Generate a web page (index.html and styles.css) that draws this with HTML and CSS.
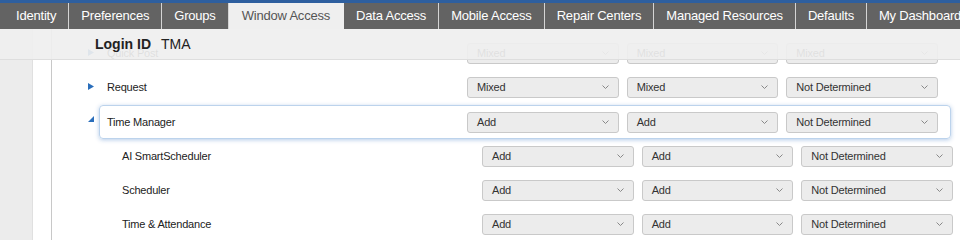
FILE: index.html
```html
<!DOCTYPE html>
<html lang="en">
<head>
<meta charset="utf-8">
<title>Window Access</title>
<link rel="stylesheet" href="styles.css">
</head>
<body>
	<div class="topbar"></div>
	<ul class="tabs">
		<li class="first">Identity</li>
		<li>Preferences</li>
		<li>Groups</li>
		<li class="active">Window Access</li>
		<li>Data Access</li>
		<li>Mobile Access</li>
		<li>Repair Centers</li>
		<li>Managed Resources</li>
		<li>Defaults</li>
		<li>My Dashboard</li>
	</ul>

	<div class="page">
		<div class="gutter"></div>
		<div class="gutter2"></div>
		<div class="main">
			<div class="row">
				<svg class="tog" width="6" height="7" viewBox="0 0 6 7"><path d="M0 0L6 3.5L0 7Z" fill="#2a6ebb"/></svg>
				<div class="item">
					<div class="label">Quick Post</div>
					<div class="dd"><span>Mixed</span><svg width="7" height="4" viewBox="0 0 7 4"><path d="M0.5 0.5L3.5 3.5L6.5 0.5" fill="none" stroke="#888"/></svg></div>
					<div class="dd"><span>Mixed</span><svg width="7" height="4" viewBox="0 0 7 4"><path d="M0.5 0.5L3.5 3.5L6.5 0.5" fill="none" stroke="#888"/></svg></div>
					<div class="dd"><span>Mixed</span><svg width="7" height="4" viewBox="0 0 7 4"><path d="M0.5 0.5L3.5 3.5L6.5 0.5" fill="none" stroke="#888"/></svg></div>
				</div>
			</div>
			<div class="row">
				<svg class="tog" width="6" height="7" viewBox="0 0 6 7"><path d="M0 0L6 3.5L0 7Z" fill="#2a6ebb"/></svg>
				<div class="item">
					<div class="label">Request</div>
					<div class="dd"><span>Mixed</span><svg width="7" height="4" viewBox="0 0 7 4"><path d="M0.5 0.5L3.5 3.5L6.5 0.5" fill="none" stroke="#888"/></svg></div>
					<div class="dd"><span>Mixed</span><svg width="7" height="4" viewBox="0 0 7 4"><path d="M0.5 0.5L3.5 3.5L6.5 0.5" fill="none" stroke="#888"/></svg></div>
					<div class="dd"><span>Not Determined</span><svg width="7" height="4" viewBox="0 0 7 4"><path d="M0.5 0.5L3.5 3.5L6.5 0.5" fill="none" stroke="#888"/></svg></div>
				</div>
			</div>
			<div class="row open">
				<svg class="tog" width="6" height="7" viewBox="0 0 6 7"><path d="M6 0L6 6L0 6Z" fill="#2a6ebb"/></svg>
				<div class="item selected">
					<div class="label">Time Manager</div>
					<div class="dd"><span>Add</span><svg width="7" height="4" viewBox="0 0 7 4"><path d="M0.5 0.5L3.5 3.5L6.5 0.5" fill="none" stroke="#888"/></svg></div>
					<div class="dd"><span>Add</span><svg width="7" height="4" viewBox="0 0 7 4"><path d="M0.5 0.5L3.5 3.5L6.5 0.5" fill="none" stroke="#888"/></svg></div>
					<div class="dd"><span>Not Determined</span><svg width="7" height="4" viewBox="0 0 7 4"><path d="M0.5 0.5L3.5 3.5L6.5 0.5" fill="none" stroke="#888"/></svg></div>
				</div>
			</div>
			<div class="row child">
				<div class="item">
					<div class="label">AI SmartScheduler</div>
					<div class="dd"><span>Add</span><svg width="7" height="4" viewBox="0 0 7 4"><path d="M0.5 0.5L3.5 3.5L6.5 0.5" fill="none" stroke="#888"/></svg></div>
					<div class="dd"><span>Add</span><svg width="7" height="4" viewBox="0 0 7 4"><path d="M0.5 0.5L3.5 3.5L6.5 0.5" fill="none" stroke="#888"/></svg></div>
					<div class="dd"><span>Not Determined</span><svg width="7" height="4" viewBox="0 0 7 4"><path d="M0.5 0.5L3.5 3.5L6.5 0.5" fill="none" stroke="#888"/></svg></div>
				</div>
			</div>
			<div class="row child">
				<div class="item">
					<div class="label">Scheduler</div>
					<div class="dd"><span>Add</span><svg width="7" height="4" viewBox="0 0 7 4"><path d="M0.5 0.5L3.5 3.5L6.5 0.5" fill="none" stroke="#888"/></svg></div>
					<div class="dd"><span>Add</span><svg width="7" height="4" viewBox="0 0 7 4"><path d="M0.5 0.5L3.5 3.5L6.5 0.5" fill="none" stroke="#888"/></svg></div>
					<div class="dd"><span>Not Determined</span><svg width="7" height="4" viewBox="0 0 7 4"><path d="M0.5 0.5L3.5 3.5L6.5 0.5" fill="none" stroke="#888"/></svg></div>
				</div>
			</div>
			<div class="row child">
				<div class="item">
					<div class="label">Time &amp; Attendance</div>
					<div class="dd"><span>Add</span><svg width="7" height="4" viewBox="0 0 7 4"><path d="M0.5 0.5L3.5 3.5L6.5 0.5" fill="none" stroke="#888"/></svg></div>
					<div class="dd"><span>Add</span><svg width="7" height="4" viewBox="0 0 7 4"><path d="M0.5 0.5L3.5 3.5L6.5 0.5" fill="none" stroke="#888"/></svg></div>
					<div class="dd"><span>Not Determined</span><svg width="7" height="4" viewBox="0 0 7 4"><path d="M0.5 0.5L3.5 3.5L6.5 0.5" fill="none" stroke="#888"/></svg></div>
				</div>
			</div>
		</div>

		<div class="login">
			<b>Login ID</b><span>TMA</span>
		</div>
	</div>
</body>
</html>
```

FILE: styles.css
```css
html, body {
	margin: 0;
	padding: 0;
	height: 100%;
	overflow: hidden;
	background: #fff;
}
body {
	font: normal 11px "Liberation Sans", Arial, sans-serif;
	letter-spacing: -0.2px;
	color: #222;
}

/* TOP TABS */
.topbar {
	height: 3px;
	background: #2e5f9f;
}
.tabs {
	display: flex;
	margin: 0;
	padding: 0;
	list-style: none;
	background: #636363;
	height: 26px;
	white-space: nowrap;
}
.tabs li {
	padding: 0 12px;
	line-height: 26px;
	font-size: 13px;
	letter-spacing: -0.2px;
	color: #fff;
	border-right: 1px solid #d4d4d4;
}
.tabs li.first {
	padding: 0 12px 0 16px;
}
.tabs li.active {
	background: #efefef;
	color: #555;
	border-right: 0;
	padding: 0 14px 0 13px;
}

/* PAGE */
.page {
	position: relative;
	display: flex;
	height: 211px;
}
.gutter {
	width: 32px;
	background: #ececec;
	border-right: 1px solid #e0e0e0;
}
.gutter2 {
	width: 18px;
	border-right: 1px solid #c8c8c8;
}
.main {
	flex: 1;
	padding-top: 7px;
	overflow: hidden;
}
.row {
	display: flex;
	align-items: center;
	height: 34px;
	padding-left: 36px;
}
.row .tog {
	width: 6px;
	height: 7px;
	margin-right: 5px;
	margin-top: -2px;
}
.row.open {
	height: 35px;
	align-items: flex-end;
}
.row.open .tog {
	margin-bottom: 16px;
}
.row.child {
	padding-left: 62px;
}
.item {
	display: flex;
	align-items: center;
	gap: 8px;
	width: 852px;
	height: 34px;
	box-sizing: border-box;
	padding: 0 12px 0 7px;
	border: 1px solid transparent;
	border-radius: 4px;
	flex-shrink: 0;
}
.item.selected {
	border-color: #bcd3ec;
	box-shadow: 0 1px 4px rgba(90, 140, 205, 0.45);
}
.item .label {
	width: 353px;
	color: #222;
}

/* DROPDOWNS */
.dd {
	display: flex;
	align-items: center;
	justify-content: space-between;
	width: 152px;
	height: 21px;
	box-sizing: border-box;
	padding: 0 9px 0 9px;
	background: #ececec;
	border: 1px solid #c9c9c9;
	border-radius: 3px;
	color: #333;
}
.dd svg {
	width: 7px;
	height: 4px;
}

/* LOGIN HEADER */
.login {
	position: absolute;
	left: 0;
	top: 0;
	right: 0;
	height: 30px;
	background: rgba(239, 239, 239, 0.92);
	border-bottom: 1px solid #dedede;
	display: flex;
	align-items: center;
	padding-left: 95px;
	font-size: 14px;
	letter-spacing: 0;
	color: #222;
}
.login span {
	margin-left: 10px;
}
```
